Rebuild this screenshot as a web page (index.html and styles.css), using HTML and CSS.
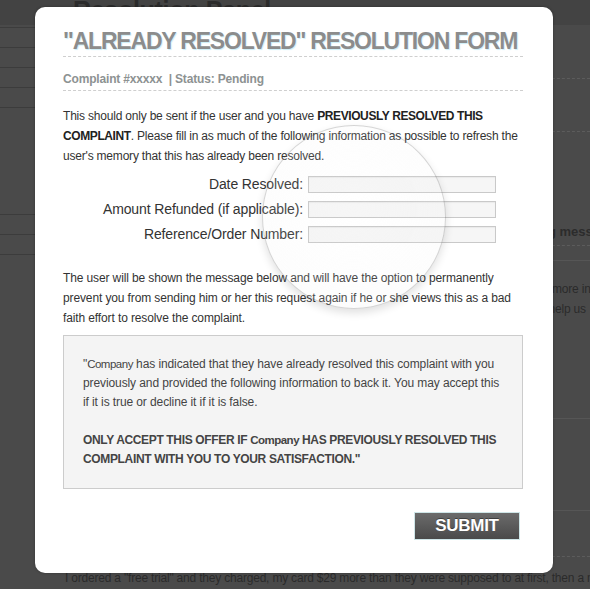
FILE: index.html
```html
<!DOCTYPE html>
<html>
<head>
<meta charset="utf-8">
<link rel="stylesheet" href="styles.css">
</head>
<body>
<div class="page">
  <div class="topbar"><h1 class="page-title">Resolution Panel</h1></div>
  <div class="cols">
    <div class="side">
      <div class="side-row"></div><div class="side-row"></div><div class="side-row"></div><div class="side-row"></div><div class="side-row"></div>
      <div class="side-gap"></div>
      <div class="side-row"></div><div class="side-row"></div><div class="side-row"></div>
    </div>
    <div class="main">
      <div class="sec sec-a"></div>
      <div class="sec sec-b"></div>
      <div class="sec sec-c"><p class="bold-line">Complaint waiting message</p></div>
      <div class="sec sec-d"></div>
      <div class="sec sec-e"><p class="bg-text l1">more information</p><p class="bg-text l2">and help us</p></div>
      <div class="sec sec-f"></div>
      <div class="sec sec-g"></div>
      <div class="sec sec-h"><p class="bg-text">I ordered a "free trial" and they charged, my card $29 more than they were supposed to at first, then a month later</p></div>
    </div>
  </div>
</div>

<div class="modal">
  <div class="loupe"></div>
  <h2 class="form-title">"ALREADY RESOLVED" RESOLUTION FORM</h2>
  <div class="meta">Complaint #xxxxx &nbsp;| Status: Pending</div>
  <p class="intro first">This should only be sent if the user and you have <b>PREVIOUSLY RESOLVED THIS COMPLAINT</b>. Please fill in as much of the following information as possible to refresh the user's memory that this has already been resolved.</p>
  <div class="fields">
    <label class="field"><span class="lbl">Date Resolved:</span><span class="inp"></span></label>
    <label class="field"><span class="lbl">Amount Refunded (if applicable):</span><span class="inp"></span></label>
    <label class="field"><span class="lbl">Reference/Order Number:</span><span class="inp"></span></label>
  </div>
  <p class="intro second">The user will be shown the message below and will have the option to permanently prevent you from sending him or her this request again if he or she views this as a bad faith effort to resolve the complaint.</p>
  <div class="quote">
    <p>"<span class="co">Company</span> has indicated that they have already resolved this complaint with you previously and provided the following information to back it. You may accept this if it is true or decline it if it is false.</p>
    <p class="strong">ONLY ACCEPT THIS OFFER IF <span class="co">Company</span> HAS PREVIOUSLY RESOLVED THIS COMPLAINT WITH YOU TO YOUR SATISFACTION."</p>
  </div>
  <div class="actions"><button class="submit">SUBMIT</button></div>
</div>
</body>
</html>
```
FILE: styles.css
```css
html, body { margin: 0; padding: 0; }
body {
  width: 590px;
  height: 589px;
  overflow: hidden;
  background: #4a4a4a;
  font-family: "Liberation Sans", Arial, Helvetica, sans-serif;
  position: relative;
}

/* dimmed background page */
.page { width: 590px; height: 589px; overflow: hidden; }
.topbar { height: 25px; background: #434343; overflow: hidden; }
.page-title {
  margin: 0 0 0 73px;
  font-size: 25px;
  line-height: 20px;
  font-weight: bold;
  color: #2b2b2b;
  letter-spacing: -0.3px;
}
.cols { display: flex; }
.side { width: 60px; flex: none; }
.side-row { height: 19px; border-top: 1px solid #3c3c3c; }
.side-row:first-child { margin-top: 2px; }
.side-gap { height: 87px; }
.main { flex: 1; min-width: 0; padding-left: 5px; }
.sec { box-sizing: border-box; }
.sec-a { height: 54px; border-bottom: 1px dashed #5c5c5c; }
.sec-b { height: 53px; border-bottom: 1px dashed #5c5c5c; }
.sec-c { height: 114px; border-bottom: 1px dashed #5c5c5c; padding-top: 92px; }
.sec-d { height: 15px; border-bottom: 1px solid #565656; }
.sec-e { height: 158px; border-bottom: 1px solid #565656; padding-top: 18px; }
.sec-f { height: 92px; border-bottom: 1px solid #565656; }
.sec-g { height: 46px; border-bottom: 1px dashed #5c5c5c; }
.sec-h { padding-top: 11px; }
.bold-line { margin: 0 0 0 379px; font-size: 13px; font-weight: bold; color: #2c2c2c; white-space: nowrap; line-height: 16px; }
.bg-text { margin: 0; font-size: 12px; letter-spacing: -0.2px; color: #2a2a2a; white-space: nowrap; line-height: 20px; }
.sec-e .l1 { margin-left: 487px; }
.sec-e .l2 { margin-left: 461px; }

/* modal */
.modal {
  position: absolute;
  left: 35px;
  top: 7px;
  width: 518px;
  height: 566px;
  box-sizing: border-box;
  background: #fff;
  border-radius: 10px;
  padding: 23px 30px 0 28px;
  box-shadow: 0 0 3px rgba(0,0,0,0.3);
}
.loupe {
  position: absolute;
  left: 227px;
  top: 118px;
  width: 182px;
  height: 182px;
  border-radius: 50%;
  border: 1px solid rgba(0,0,0,0.16);
  box-shadow: 0 4px 8px rgba(0,0,0,0.12);
  background: radial-gradient(circle at 50% 45%, rgba(255,255,255,0) 0%, rgba(240,240,240,0.15) 70%, rgba(0,0,0,0.03) 100%);
  pointer-events: none;
}
.form-title {
  margin: 0;
  font-size: 23px;
  line-height: 23px;
  font-weight: bold;
  letter-spacing: -1.2px;
  color: #8c8c8c;
  text-shadow: 1px 1px 1px #cdeef8;
  padding-bottom: 3px;
  border-bottom: 1px dashed #cfcfcf;
  white-space: nowrap;
}
.meta {
  font-size: 12px;
  line-height: 14px;
  font-weight: bold;
  letter-spacing: -0.17px;
  color: #8d9292;
  padding: 15px 0 4px;
  border-bottom: 1px dashed #cfcfcf;
}
.intro {
  margin: 15px 0 0;
  font-size: 12px;
  line-height: 20px;
  letter-spacing: -0.12px;
  color: #333;
}
.intro.first { letter-spacing: -0.2px; }
.intro b { color: #222; letter-spacing: -0.4px; }
.intro.second { margin-top: 25px; }
.fields { display: flex; flex-direction: column; gap: 8px; margin-top: 10px; }
.field { display: flex; align-items: center; }
.lbl {
  width: 240px;
  text-align: right;
  font-size: 14px;
  line-height: 17px;
  letter-spacing: -0.12px;
  color: #333;
}
.inp {
  margin-left: 5px;
  width: 188px;
  height: 17px;
  box-sizing: border-box;
  border: 1px solid #c9c9c9;
  background: #f6f6f6;
  box-shadow: inset 0 1px 1px rgba(0,0,0,0.05);
}
.quote {
  margin-top: 7px;
  background: #f4f4f4;
  border: 1px solid #cccccc;
  padding: 19px 19px 19px 19px;
}
.quote p {
  margin: 0;
  font-size: 12px;
  line-height: 19px;
  color: #444;
  letter-spacing: -0.1px;
}
.quote p + p { margin-top: 19px; }
.quote .strong { font-weight: bold; letter-spacing: -0.35px; }
.co { font-size: 11.5px; letter-spacing: -0.5px; }
.actions { display: flex; justify-content: flex-end; margin-top: 23px; padding-right: 3px; }
.submit {
  width: 106px;
  height: 28px;
  box-sizing: border-box;
  border: 1px solid #cfe6e8;
  background: linear-gradient(#6b6b6b, #4a4a4a);
  color: #fff;
  font-family: "Liberation Sans", Arial, sans-serif;
  font-weight: bold;
  font-size: 17px;
  letter-spacing: -0.3px;
  padding: 0;
  text-shadow: 0 -1px 0 rgba(0,0,0,0.4);
}
```
